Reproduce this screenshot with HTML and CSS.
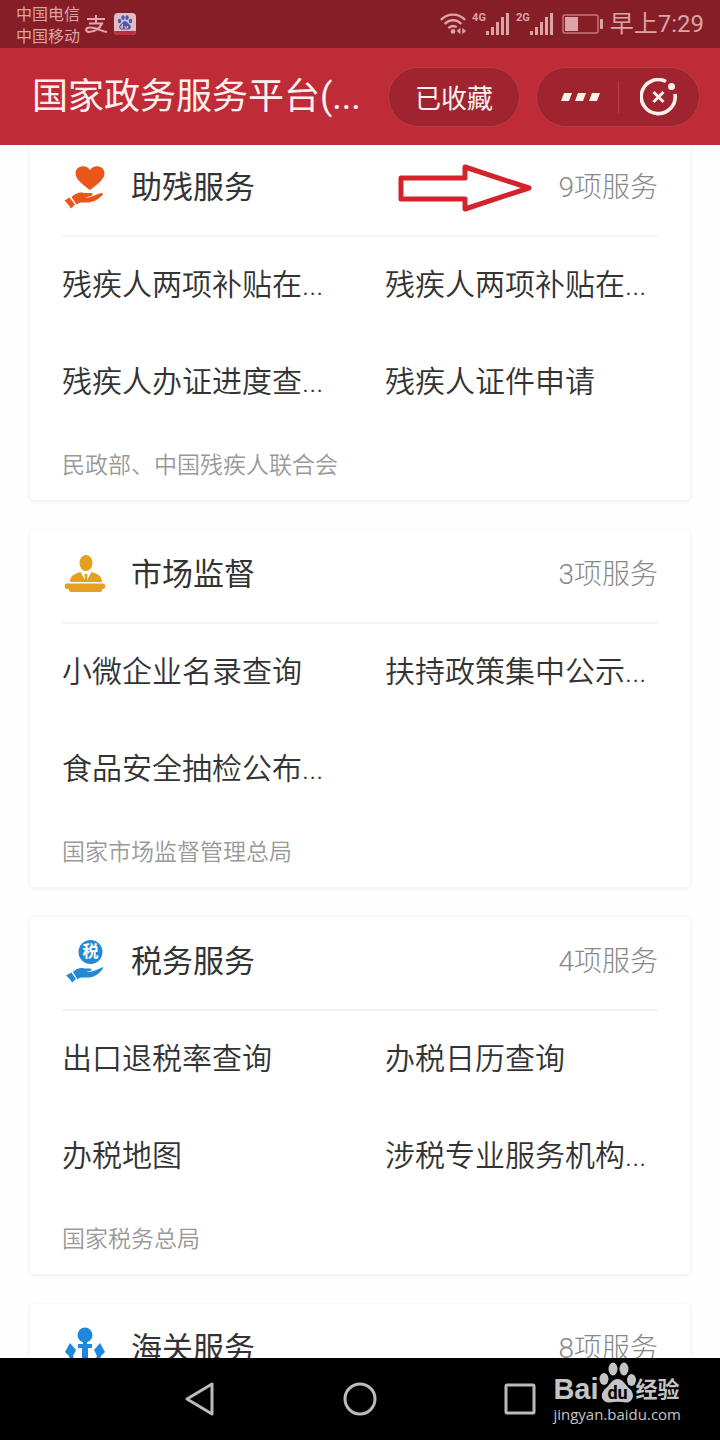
FILE: index.html
```
<!DOCTYPE html>
<html lang="zh-CN">
<head>
    <meta charset="UTF-8">
    <meta name="viewport" content="width=device-width, initial-scale=1.0">
    <title>国家政务服务平台</title>
    <link rel="stylesheet" href="styles.css">
</head>
<body>
    <!-- 状态栏 -->
    <div class="status">
        <div class="carrier">
            <span>中国电信</span>
            <span>中国移动</span>
        </div>
        <svg class="status-pay" width="24" height="20" viewBox="0 0 24 20" fill="none" stroke="#e0a9ac" stroke-width="2">
            <path d="M2 5H20M11 1V9M4 9.500H17C15 14 10 18 4 18C0 18 0 13.500 5 13.500C11 13.500 16 17 22 18"/>
        </svg>
        <svg class="status-app" width="22" height="22" viewBox="0 0 22 22">
            <rect width="22" height="22" rx="4" fill="#e2bcc4"/>
            <path d="M0 18H22A4 4 0 0 1 18 22H4A4 4 0 0 1 0 18Z" fill="#b8323b"/>
            <g fill="#4a5cb0">
                <ellipse cx="5.500" cy="8" rx="1.700" ry="2.300"/>
                <ellipse cx="9" cy="4.700" rx="1.700" ry="2.400"/>
                <ellipse cx="13" cy="4.700" rx="1.700" ry="2.400"/>
                <ellipse cx="16.500" cy="8" rx="1.700" ry="2.300"/>
                <path d="M11 8C13 8 14 10.500 16 12C18 14 16 17 13.500 16.500H8.500C6 17 4 14 6 12C8 10.500 9 8 11 8Z"/>
            </g>
            <path d="M8.500 11V15H7V13H8.500M11 13V15H13.500V13" stroke="#e2bcc4" fill="none"/>
        </svg>
        <div class="status-right">
            <svg width="26" height="24" viewBox="0 0 28 24" fill="none" stroke="#dba4a6" stroke-width="2.600">
                <path d="M1 7.500C8 0 20 0 27 7.500M5 12C10 6.500 18 6.500 23 12M9 16.500C12 13.500 15 13.500 18 15.500"/>
                <circle cx="14" cy="20" r="2.500" fill="#dba4a6" stroke="none"/>
                <path d="M22 16V23L18 19.500ZM24 16V23L28 19.500Z" fill="#dba4a6" stroke="none"/>
            </svg>
            <div class="signal">
                <span>4G</span>
                <svg width="24" height="24" viewBox="0 0 24 24" fill="#dba4a6">
                    <path d="M0 19h3v4h-3zM5 15h3v8h-3zM10 10h3v13h-3zM15 5h3v18h-3zM20 1h3v22h-3z"/>
                </svg>
            </div>
            <div class="signal">
                <span>2G</span>
                <svg width="24" height="24" viewBox="0 0 24 24" fill="#dba4a6">
                    <path d="M0 19h3v4h-3zM5 15h3v8h-3zM10 10h3v13h-3zM15 5h3v18h-3zM20 1h3v22h-3z"/>
                </svg>
            </div>
            <svg class="battery" width="42" height="20" viewBox="0 0 42 20">
                <rect x="1" y="1" width="35" height="18" rx="2" fill="none" stroke="#c0787d" stroke-width="1.500"/>
                <rect x="3" y="3" width="13" height="14" fill="#dba4a6"/>
                <rect x="38" y="5" width="3" height="10" rx="1" fill="#dba4a6"/>
            </svg>
            <span class="time">早上7:29</span>
        </div>
    </div>

    <!-- 标题栏 -->
    <header class="header">
        <h1 class="title">国家政务服务平台(...</h1>
        <button class="pill">已收藏</button>
        <div class="capsule">
            <button class="capsule-btn more" aria-label="更多">
                <svg width="40" height="8" viewBox="0 0 40 8" fill="#fff0ee">
                    <path d="M3 0h8l-3 8h-8zM17 0h8l-3 8h-8zM31 0h8l-3 8h-8z"/>
                </svg>
            </button>
            <button class="capsule-btn close" aria-label="关闭">
                <svg width="38" height="38" viewBox="0 0 38 38" fill="none" stroke="#fff0ee">
                    <path d="M26 3.500A17 17 0 1 0 35 16" stroke-width="3.600"/>
                    <circle cx="31.500" cy="8.500" r="3.500" fill="#fff0ee" stroke="none"/>
                    <path d="M13.500 14L23.500 24M23.500 14L13.500 24" stroke-width="3"/>
                </svg>
            </button>
        </div>
    </header>

    <main class="main">
        <section class="card">
            <div class="card-head">
                <svg class="icon" width="46" height="46" viewBox="0 0 46 46" fill="#e8561c">
                    <path d="M28 25C23 21 13.500 15 13.500 8.500C13.500 0 25 -1 28 5C31 -1 42.500 0 42.500 8.500C42.500 15 33 21 28 25Z"/>
                    <path d="M9.500 32C13 28.500 18 26.500 22 28H29C31 28 31 30.500 29 31L23 32.500C29 33 35 29 39.500 28C41 28 41.500 29 40 30.500C35 35.500 30 37.500 25 37.500C20 37.500 18 37 14.500 39.500Z"/>
                    <path d="M2.500 35.500L7.500 32.500L13 39.500L9 43.500C7 40 5 38 2.500 35.500Z"/>
                </svg>
                <h2 class="name">助残服务</h2>
                <svg class="arrow" width="134" height="48" viewBox="0 0 134 48" fill="none" stroke="#d3242c" stroke-width="5" stroke-linejoin="round">
                    <path d="M3 14H67V3L131 24L67 45V35H3Z"/>
                </svg>
                <a class="count" href="#">9项服务</a>
            </div>
            <div class="list">
                <a href="#">残疾人两项补贴在...</a>
                <a href="#">残疾人两项补贴在...</a>
                <a href="#">残疾人办证进度查...</a>
                <a href="#">残疾人证件申请</a>
            </div>
            <p class="from">民政部、中国残疾人联合会</p>
        </section>

        <section class="card">
            <div class="card-head">
                <svg class="icon" width="46" height="46" viewBox="0 0 46 46" fill="#e3a021">
                    <ellipse cx="24" cy="11" rx="6.500" ry="8"/>
                    <path d="M8 30C8 24 12 22 18.500 20L23 28L22.500 22H25.500L25 28L29.500 20C36 22 40 24 40 30Z"/>
                    <path d="M5 31.500H41C44 31.500 44 37 41 37H40V38C40 39.500 39 40 38 40H10C8 40 7 39.500 7 38V37H5C2 37 2 31.500 5 31.500Z"/>
                </svg>
                <h2 class="name">市场监督</h2>
                <a class="count" href="#">3项服务</a>
            </div>
            <div class="list">
                <a href="#">小微企业名录查询</a>
                <a href="#">扶持政策集中公示...</a>
                <a href="#">食品安全抽检公布...</a>
            </div>
            <p class="from">国家市场监督管理总局</p>
        </section>

        <section class="card">
            <div class="card-head">
                <svg class="icon" width="46" height="46" viewBox="0 0 46 46" fill="#2289d2">
                    <circle cx="28.500" cy="13" r="12"/>
                    <text class="tax" x="28.500" y="18" text-anchor="middle">税</text>
                    <path d="M11 33C14 29.500 19 28 23 29.500H28C30 29.500 30 31.500 28 32L24 33C30 33.500 36 30 41.500 28C39 34 33 38 27 38.500C21 39 19 37 15.500 40.500Z"/>
                    <path d="M4 36.500L9.500 33.500L14 40L10 43.500C8 40 7 39 4 36.500Z"/>
                </svg>
                <h2 class="name">税务服务</h2>
                <a class="count" href="#">4项服务</a>
            </div>
            <div class="list">
                <a href="#">出口退税率查询</a>
                <a href="#">办税日历查询</a>
                <a href="#">办税地图</a>
                <a href="#">涉税专业服务机构...</a>
            </div>
            <p class="from">国家税务总局</p>
        </section>

        <section class="card">
            <div class="card-head">
                <svg class="icon" width="46" height="46" viewBox="0 0 46 46" fill="#1e88dd">
                    <circle cx="23" cy="9" r="7.500"/>
                    <path d="M21 15H25V18H30V22H26V37C31 36 34 33 35 30L32 24L38 17L43 26L39 30C37 39 29 43 23 44C17 43 9 39 7 30L3 26L8 17L14 24L11 30C12 33 15 36 20 37V22H16V18H21Z"/>
                </svg>
                <h2 class="name">海关服务</h2>
                <a class="count" href="#">8项服务</a>
            </div>
        </section>
    </main>

    <!-- 底部导航键 -->
    <nav class="nav">
        <button aria-label="返回">
            <svg width="40" height="40" viewBox="0 0 40 40"><path d="M7 20L32 5V35Z"/></svg>
        </button>
        <button aria-label="主页">
            <svg width="40" height="40" viewBox="0 0 40 40"><circle cx="20" cy="20" r="15"/></svg>
        </button>
        <button aria-label="最近任务">
            <svg width="40" height="40" viewBox="0 0 40 40"><rect x="6" y="6" width="28" height="28" rx="1"/></svg>
        </button>
        <div class="watermark">
            <div class="logo">
                <span class="logo-bai">Bai</span>
                <svg width="37" height="42" viewBox="0 0 37 42">
                    <g fill="#c4c4c4">
                        <ellipse cx="5" cy="17" rx="4.500" ry="6"/>
                        <ellipse cx="14" cy="7" rx="4.500" ry="6.500"/>
                        <ellipse cx="25" cy="7" rx="4.500" ry="6.500"/>
                        <ellipse cx="32.500" cy="18" rx="4.500" ry="6"/>
                        <path d="M18.500 17C24 17 26 23 31 27C37 33 33 41 27 40.500C22 39.500 16 39.500 11 40.500C3 41 0 33 6 27C11 23 13 17 18.500 17Z"/>
                    </g>
                    <text class="logo-du" x="18.500" y="37" text-anchor="middle">du</text>
                </svg>
                <span class="logo-jy">经验</span>
            </div>
            <div class="site">jingyan.baidu.com</div>
        </div>
    </nav>
</body>
</html>
```
FILE: styles.css
```
*{
    margin: 0;
    padding: 0;
    box-sizing: border-box;
}
body{
    height: 100vh;
    display: flex;
    flex-direction: column;
    overflow: hidden;
    background-color: #fefefe;
    color: #333;
    font-family: Roboto, "Noto Sans CJK SC", sans-serif;
}
a{
    color: inherit;
    text-decoration: none;
}
button{
    border: none;
    background: none;
    color: inherit;
    font-family: inherit;
}
svg{
    display: block;
    flex-shrink: 0;
}

/* 状态栏 */
.status{
    height: 48px;
    flex-shrink: 0;
    display: flex;
    align-items: center;
    padding: 0 16px;
    background-color: #851e26;
    color: #dba4a6;
}
.carrier{
    display: flex;
    flex-direction: column;
    padding-top: 4px;
    font-size: 16px;
    line-height: 22px;
}
.status-pay{
    margin-left: 5px;
}
.status-app{
    margin-left: 5px;
}
.status-right{
    flex: 1;
    display: flex;
    align-items: center;
    justify-content: flex-end;
    gap: 6px;
}
.signal{
    display: flex;
    align-items: flex-start;
}
.signal span{
    font-size: 11px;
    line-height: 12px;
    font-weight: 700;
}
.battery{
    margin-left: 2px;
}
.time{
    font-size: 24px;
    line-height: 32px;
}

/* 标题栏 */
.header{
    height: 97px;
    flex-shrink: 0;
    display: flex;
    align-items: center;
    margin-bottom: -2px;
    padding: 0 20px 0 32px;
    background-color: #bf2b37;
    color: #fff0ee;
    position: relative;
    z-index: 1;
}
.title{
    flex: 1;
    font-size: 36px;
    line-height: 48px;
    font-weight: 400;
    white-space: nowrap;
}
.pill,
.capsule{
    height: 60px;
    border: 1px solid #b83c46;
    border-radius: 30px;
    background-color: #a02430;
}
.pill{
    width: 132px;
    font-size: 26px;
}
.capsule{
    width: 164px;
    margin-left: 16px;
    display: flex;
    align-items: center;
}
.capsule-btn{
    width: 50%;
    height: 32px;
    display: flex;
    align-items: center;
    justify-content: center;
}
.more{
    padding-left: 6px;
}
.close{
    border-left: 1px solid #b5404b;
}

/* 服务卡片 */
.main{
    flex: 1;
    min-height: 0;
    overflow: hidden;
    padding: 0 30px;
    display: flex;
    flex-direction: column;
    gap: 30px;
}
.card{
    flex-shrink: 0;
    padding: 0 32px;
    background-color: #fff;
    border-radius: 4px;
    box-shadow: 0 1px 5px rgba(0,0,0,.08);
}
.card-head{
    height: 94px;
    display: flex;
    align-items: center;
    padding-bottom: 2px;
    border-bottom: 2px solid #f3f3f3;
}
.icon{
    margin-right: 23px;
}
.name{
    flex: 1;
    font-size: 31px;
    line-height: 40px;
    font-weight: 400;
}
.tax{
    font-size: 16px;
    font-weight: 700;
    fill: #fff;
}
.arrow{
    margin-right: 26px;
}
.count{
    font-size: 28px;
    line-height: 40px;
    font-weight: 300;
    color: #888;
}
.list{
    display: grid;
    grid-template-columns: 1fr 1fr;
    grid-auto-rows: 97px;
    column-gap: 50px;
    font-size: 30px;
    line-height: 96px;
    font-weight: 350;
    white-space: nowrap;
}
.from{
    font-size: 23px;
    line-height: 69px;
    font-weight: 350;
    color: #999;
}

/* 底部导航键 */
.nav{
    height: 82px;
    flex-shrink: 0;
    display: flex;
    align-items: center;
    justify-content: center;
    gap: 120px;
    background-color: #000;
    position: relative;
}
.nav button svg{
    fill: none;
    stroke: #bbb;
    stroke-width: 3;
    stroke-linejoin: round;
}
.watermark{
    position: absolute;
    right: 39px;
    bottom: 16px;
    color: #c4c4c4;
}
.logo{
    display: flex;
    align-items: flex-end;
}
.logo-bai{
    font-family: "Liberation Sans", sans-serif;
    font-size: 29px;
    line-height: 30px;
    font-weight: 700;
}
.logo-jy{
    font-size: 22px;
    line-height: 28px;
    font-weight: 700;
}
.logo-du{
    font-size: 18px;
    font-weight: 700;
}
.site{
    font-family: "Open Sans", sans-serif;
    font-size: 15px;
    line-height: 20px;
}
```
